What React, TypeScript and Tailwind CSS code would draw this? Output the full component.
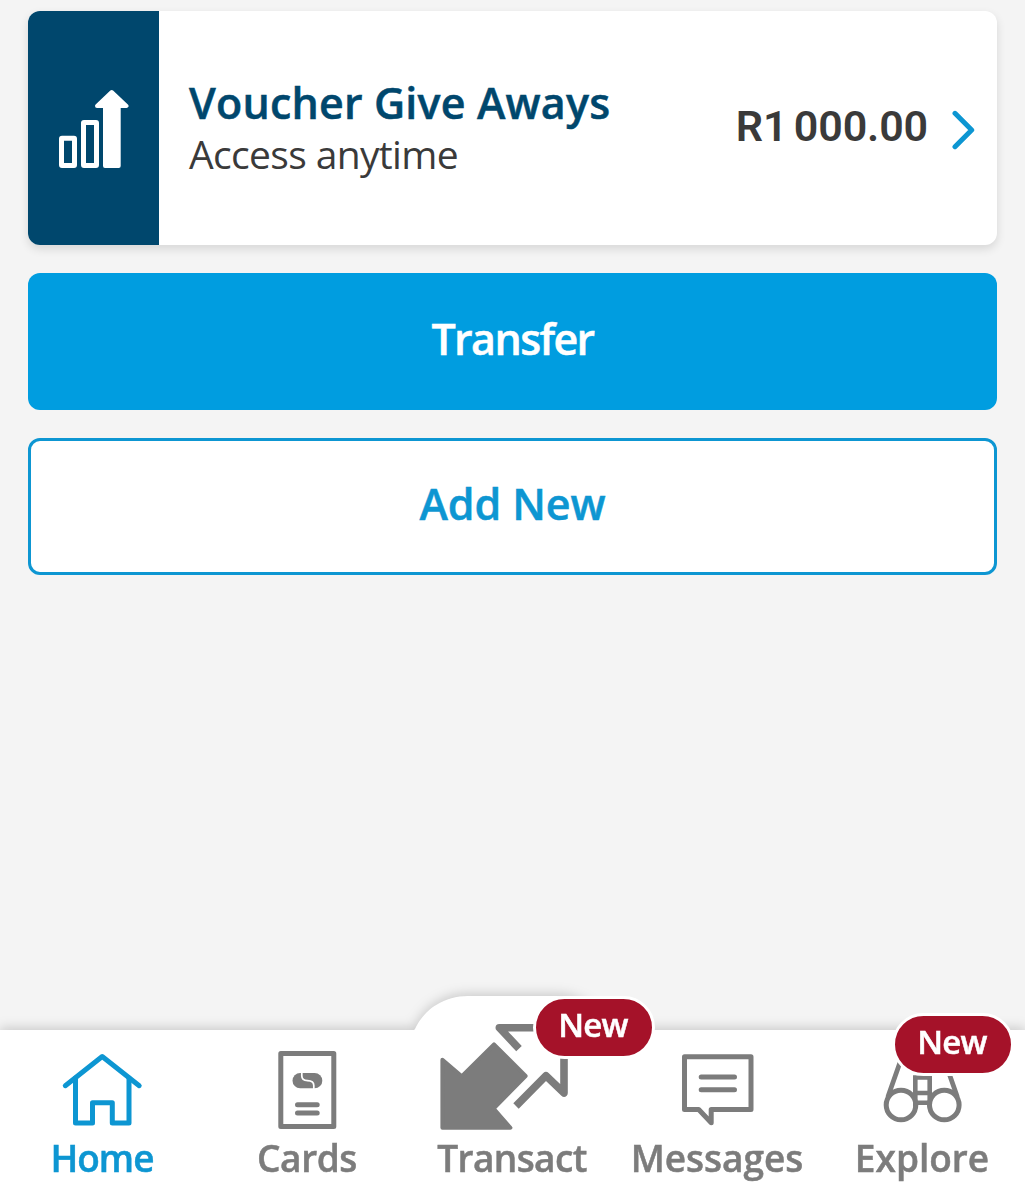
import type { ReactNode } from "react";

function GrowthIcon() {
  return (
    <svg className="mt-[2px]" width="70" height="80" viewBox="0 0 70 80" fill="none">
      <rect x="2.5" y="49.2" width="13" height="27.3" rx="0.5" stroke="#fff" strokeWidth="5" strokeLinejoin="round" />
      <rect x="24.5" y="33.6" width="13" height="42.9" rx="0.5" stroke="#fff" strokeWidth="5" strokeLinejoin="round" />
      <path
        d="M46 77V17H38L52.7 3L67.5 17H59.7V77Z"
        fill="#fff"
        stroke="#fff"
        strokeWidth="4"
        strokeLinejoin="round"
      />
    </svg>
  );
}

function ChevronIcon() {
  return (
    <svg className="mt-1" width="24" height="40" viewBox="0 0 24 40" fill="none" stroke="#0d96d2" strokeWidth="5">
      <path d="M4 3.3L20.7 20L4 36.7" strokeLinecap="round" strokeLinejoin="round" />
    </svg>
  );
}

// Every tab icon is drawn on the same 165x104 box.
function TabIcon({ children }: { children: ReactNode }) {
  return (
    <svg
      width="165"
      height="104"
      viewBox="0 0 165 104"
      className="shrink-0 overflow-visible"
      fill="none"
      stroke="currentColor"
      strokeWidth="5"
      strokeLinejoin="round"
      strokeLinecap="round"
    >
      {children}
    </svg>
  );
}

function HomeIcon() {
  return (
    <TabIcon>
      <path d="M45.3 55.7L82.2 26.5L119.2 55.7" />
      <path d="M55.5 48V93H72.5V72.7H92.3V93H109V48" />
    </TabIcon>
  );
}

function CardsIcon() {
  return (
    <TabIcon>
      <rect x="55.8" y="23.5" width="53" height="73" />
      <rect x="67.5" y="43" width="29.8" height="15.3" rx="7.65" fill="currentColor" stroke="none" />
      <path
        d="M76.8 42.5V45.8C76.8 49.5 78.5 50.6 82.5 50.7C86.8 50.8 88.8 52 88.8 55.5V59"
        stroke="#fff"
        strokeWidth="1.7"
        strokeLinecap="butt"
      />
      <path d="M72.5 74.7H92.2M72.5 83H92.2" />
    </TabIcon>
  );
}

function TransactIcon() {
  return (
    <TabIcon>
      <path
        d="M12.4 29.7L31.7 46.3L64 14.4L95.6 46L63.6 78.5L80.4 97.8H12.4Z"
        fill="currentColor"
        strokeWidth="4"
      />
      <path d="M112 -2.3H69.3L89 18.7" strokeWidth="7.6" strokeLinecap="butt" />
      <path d="M86 76L116 45.7L134 63V28" strokeWidth="7.6" strokeLinecap="butt" />
    </TabIcon>
  );
}

function MessagesIcon() {
  return (
    <TabIcon>
      <path d="M49.5 26.7H116V79.5H76.2V92.7L63.7 79.5H49.5Z" />
      <path d="M66.2 47H99.5M66.2 59.7H99.5" />
    </TabIcon>
  );
}

function ExploreIcon() {
  return (
    <TabIcon>
      <circle cx="61" cy="75" r="14.8" />
      <circle cx="104.3" cy="75" r="14.8" />
      <path d="M60.5 31L48.2 66M106.5 36L117 66" strokeWidth="4.8" />
      <path d="M75.3 76V47.5H89.7V76M75.3 63H89.7M75.3 72.7H89.7" strokeWidth="4.6" strokeLinejoin="miter" />
    </TabIcon>
  );
}

function NewBadge({ className }: { className: string }) {
  return (
    <span
      className={`absolute flex h-[63px] w-[122px] items-center justify-center rounded-full border-3 border-white bg-[#a51229] pr-[2px] pb-[6px] text-[33px] leading-none font-semibold tracking-[-0.8px] text-white [-webkit-text-stroke:0.5px] ${className}`}
    >
      New
    </span>
  );
}

const tabs = [
  { label: "Home", icon: <HomeIcon />, color: "text-[#0d96d2]", tracking: "tracking-[-1px]" },
  { label: "Cards", icon: <CardsIcon />, color: "text-[#7c7c7c]", tracking: "tracking-[-0.4px]" },
  {
    label: "Transact",
    icon: <TransactIcon />,
    color: "text-[#7c7c7c]",
    tracking: "tracking-[-0.6px]",
    badge: "left-[123px] -top-[34px]",
  },
  { label: "Messages", icon: <MessagesIcon />, color: "text-[#7c7c7c]", tracking: "tracking-[0px]" },
  {
    label: "Explore",
    icon: <ExploreIcon />,
    color: "text-[#7c7c7c]",
    tracking: "tracking-[0px]",
    badge: "left-[72px] -top-[17px]",
  },
];

function TabBar() {
  return (
    <nav className="relative h-[170px]">
      <div className="absolute inset-0 drop-shadow-[0_-2px_6px_rgba(0,0,0,0.18)]">
        <div className="h-full bg-white" />
        <svg className="absolute -top-[34px] left-[412px]" width="200" height="36" viewBox="0 0 200 36">
          <path d="M0 36L3 33C13 12 33 0 56 0H144C167 0 187 12 197 33L200 36Z" fill="#fff" />
        </svg>
      </div>
      <div className="relative grid h-full grid-cols-5">
        {tabs.map((tab) => (
          <div key={tab.label} className={`relative flex flex-col items-center ${tab.color}`}>
            {tab.icon}
            <span
              className={`-mt-px -ml-px text-[37px] leading-[50px] font-semibold [-webkit-text-stroke:0.5px] ${tab.tracking}`}
            >
              {tab.label}
            </span>
            {tab.badge && <NewBadge className={tab.badge} />}
          </div>
        ))}
      </div>
    </nav>
  );
}

export default function App() {
  return (
    <div className="flex h-[1200px] w-[1025px] flex-col overflow-hidden bg-[#f4f4f4] font-['Open_Sans','Noto_Sans',sans-serif]">
      <main className="flex flex-1 flex-col gap-7 px-7 pt-[11px]">
        <section className="flex h-[234px] overflow-hidden rounded-xl bg-white shadow-[0_4px_10px_rgba(0,0,0,0.12)]">
          <div className="flex w-[131px] items-center justify-center bg-[#00476d]">
            <GrowthIcon />
          </div>
          <div className="flex flex-1 flex-col pt-[66px] pl-[30px]">
            <h2 className="text-[43px] leading-[52px] font-semibold tracking-[0.18px] whitespace-nowrap text-[#00476d] [-webkit-text-stroke:0.5px]">
              Voucher Give Aways
            </h2>
            <p className="-mt-px text-[39px] leading-[52px] tracking-[-0.65px] text-[#3a3a3a]">Access anytime</p>
          </div>
          <div className="flex items-center gap-[23px] pr-[22px]">
            <span className="pb-1 font-[Roboto,sans-serif] text-[43px] leading-none font-semibold tracking-[-0.15px] [word-spacing:-4px] whitespace-nowrap text-[#3a3a3a]">
              R1 000.00
            </span>
            <ChevronIcon />
          </div>
        </section>
        <button className="flex h-[137px] items-center justify-center rounded-xl bg-[#009de0] pb-[5px] text-[43px] font-semibold tracking-[-1.6px] text-white [-webkit-text-stroke:0.5px]">
          Transfer
        </button>
        <button className="flex h-[137px] items-center justify-center rounded-xl border-3 border-[#0d96d2] bg-white pb-1 text-[43px] font-semibold tracking-[-0.1px] text-[#0d96d2] [-webkit-text-stroke:0.5px]">
          Add New
        </button>
      </main>
      <TabBar />
    </div>
  );
}
